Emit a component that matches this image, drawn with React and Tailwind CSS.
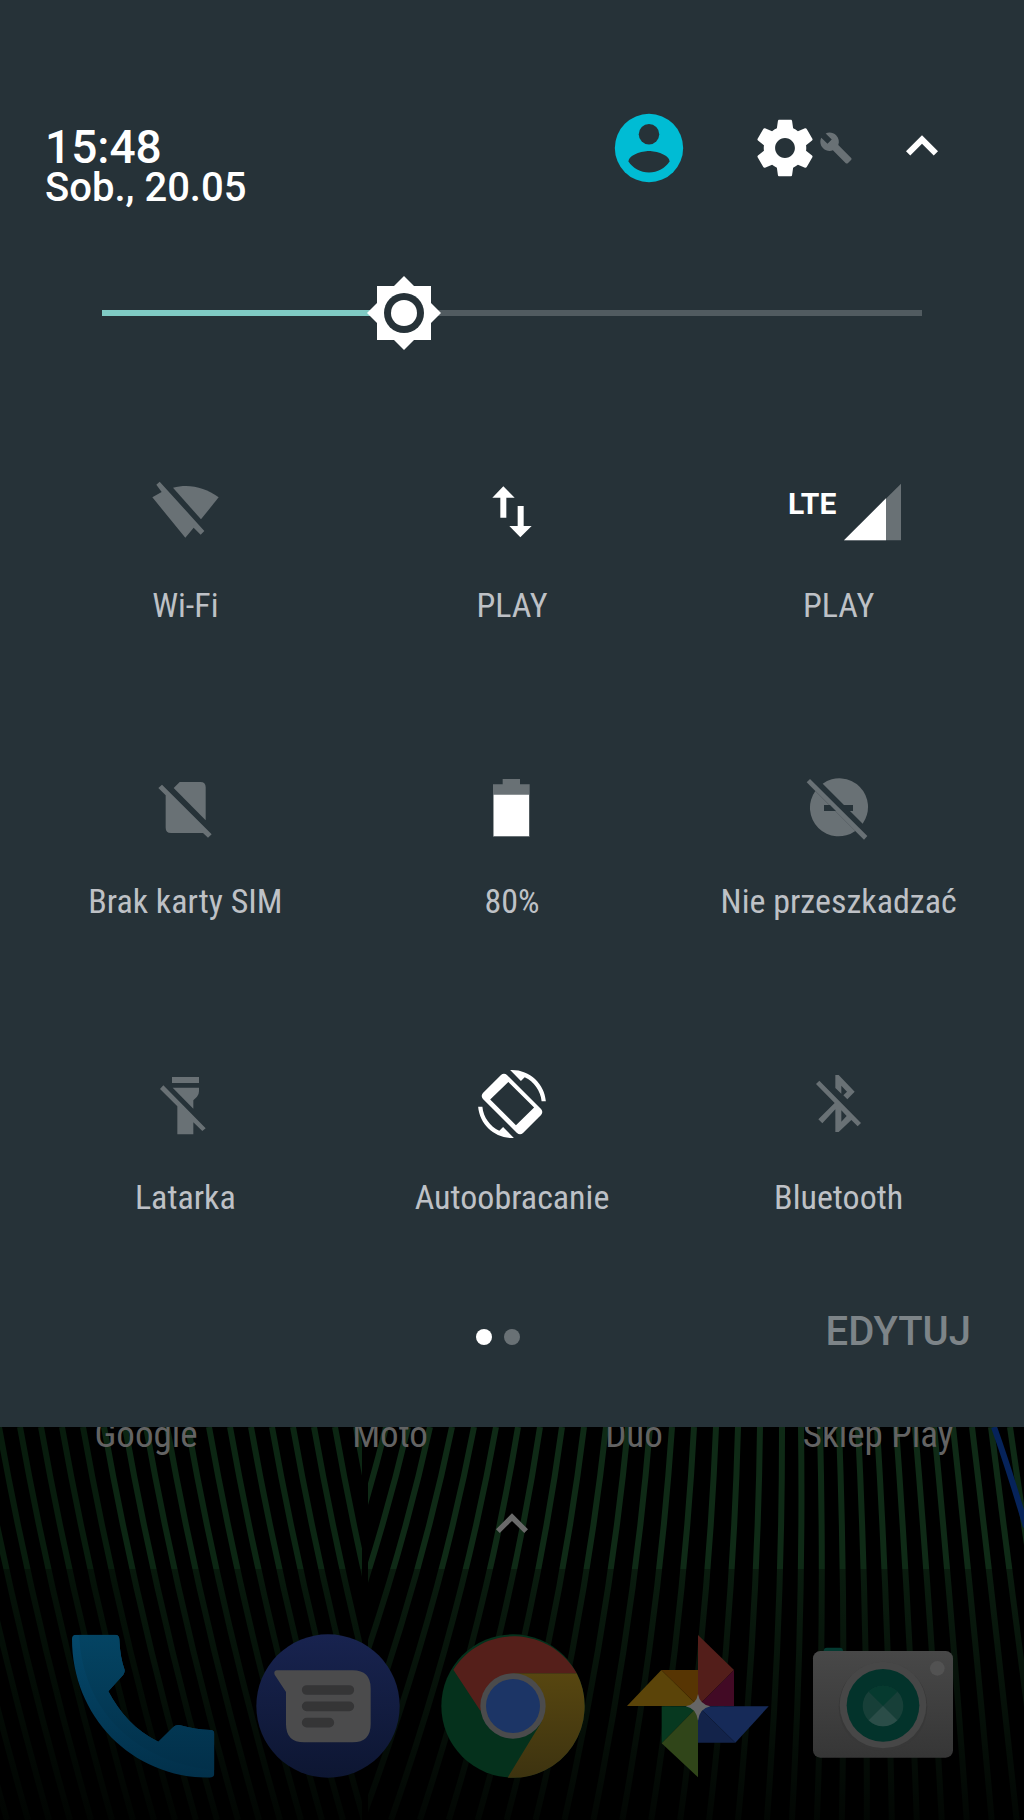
import { useState } from "react";

const DIM = "#697175";
const PANEL = "#263238";

function Glyph({ children }) {
  return (
    <svg viewBox="0 0 204 204" className="size-[68px] shrink-0" aria-hidden="true">
      {children}
    </svg>
  );
}

const icons = {
  wifi: (
    <Glyph>
      <path fill={DIM} d="M16 20 26 11 160 159 149 170 128 149 103 179 4 58 32 42Z" />
      <path fill={DIM} d="M66 29C115 17 162 28 203 58L150 124Z" />
    </Glyph>
  ),
  data: (
    <Glyph>
      <path fill="#fff" d="M76 25 110 59H85V119H67V59H43Z" />
      <path fill="#fff" d="M119 84H137V144H161L127 178 94 144H119Z" />
    </Glyph>
  ),
  signal: (
    <span className="flex items-start gap-2 pl-3">
      <span className="pt-[10px] text-[30px] leading-8 font-bold text-white">LTE</span>
      <svg viewBox="0 0 171 204" className="h-[68px] w-[57px]" aria-hidden="true">
        <path fill={DIM} d="M0 187 171 17V187Z" />
        <path fill="#fff" d="M0 187 126 61V187Z" />
      </svg>
    </span>
  ),
  sim: (
    <Glyph>
      <path fill={DIM} d="M22 42 33 32 182 181 171 191 156 177H60Q44 177 44 161V64Z" />
      <path fill={DIM} d="M68 42 86 24H148Q164 24 164 40V139Z" />
    </Glyph>
  ),
  battery: (
    <Glyph>
      <path fill={DIM} d="M45 31H74V15H126V31H155V189H45Z" />
      <path fill="#fff" d="M47 62H153V186H47Z" />
    </Glyph>
  ),
  dnd: (
    <Glyph>
      <path fill={DIM} d="M53 29A86 86 0 0 1 173 149Z" />
      <path fill={DIM} d="M31 51A86 86 0 0 0 151 171Z" />
      <path fill={DIM} d="M5 25 15 15 187 186 177 197Z" />
      <path fill={PANEL} d="M57 93H75L93 111H57ZM112 93H144V111H131Z" />
    </Glyph>
  ),
  torch: (
    <Glyph>
      <path fill={DIM} d="M63 21H144V39H63Z" />
      <path fill={DIM} d="M27 57 37 46 164 175 154 183 127 157V193H79V109Z" />
      <path fill={DIM} d="M65 53H144V64Q144 74 138 80L127 91V116Z" />
    </Glyph>
  ),
  rotate: (
    <svg viewBox="0 0 24 24" className="size-[68px]" fill="#fff" aria-hidden="true">
      <path d="M16.48 2.52c3.27 1.55 5.61 4.72 5.97 8.48h1.5C23.44 4.84 18.29 0 12 0l-.66.03 3.81 3.81 1.33-1.32z" />
      <path d="M7.52 21.48C4.25 19.94 1.91 16.76 1.55 13H.05C.56 19.16 5.71 24 12 24l.66-.03-3.81-3.81-1.33 1.32z" />
      <path
        fillRule="evenodd"
        d="M10.23 1.75c-.59-.59-1.54-.59-2.12 0L1.75 8.11c-.59.59-.59 1.54 0 2.12l12.02 12.02c.59.59 1.54.59 2.12 0l6.36-6.36c.59-.59.59-1.54 0-2.12ZM10.7 4.2 19.8 13.2 13.4 19.5 4.3 10.4Z"
      />
    </svg>
  ),
  bluetooth: (
    <Glyph>
      <path
        fill={DIM}
        fillRule="evenodd"
        d="M33 42 43 32 168 159 158 169 139 150 101 186H91V118L52 160 40 148 89 99ZM109 121V155L125 138Z"
      />
      <path fill={DIM} d="M91 15H101L149 65 127 88 115 76 126 65 109 47V71L91 54Z" />
    </Glyph>
  ),
};

const tiles = [
  ["wifi", "Wi-Fi"],
  ["data", "PLAY"],
  ["signal", "PLAY"],
  ["sim", "Brak karty SIM"],
  ["battery", "80%"],
  ["dnd", "Nie przeszkadzać"],
  ["torch", "Latarka"],
  ["rotate", "Autoobracanie"],
  ["bluetooth", "Bluetooth"],
];

function Header() {
  return (
    <header className="flex items-start justify-between pt-[107px] pr-[70px] pl-[45px]">
      <div className="pt-[17px] font-medium text-white">
        <div className="text-[46px] leading-[46px]">15:48</div>
        <div className="text-[40px] leading-9">Sob., 20.05</div>
      </div>
      <div className="flex h-[82px] items-center">
        <button aria-label="Użytkownik" className="mr-[61px]">
          <svg viewBox="0 0 24 24" className="size-[82px]">
            <circle cx="12" cy="12" r="10" fill="#00bcd4" />
            <circle cx="12" cy="8" r="3" fill={PANEL} />
            <path
              fill={PANEL}
              d="M12 19.2c-2.5 0-4.71-1.28-6-3.22.03-1.99 4-3.08 6-3.08 1.99 0 5.97 1.09 6 3.08-1.29 1.94-3.5 3.22-6 3.22z"
            />
          </svg>
        </button>
        <button aria-label="Ustawienia" className="mr-[37px] flex items-center">
          <svg viewBox="0 0 24 24" className="size-[68px]" fill="#fff">
            <path d="M19.43 12.98c.04-.32.07-.64.07-.98s-.03-.66-.07-.98l2.11-1.65c.19-.15.24-.42.12-.64l-2-3.46c-.12-.22-.39-.3-.61-.22l-2.49 1c-.52-.4-1.08-.73-1.69-.98l-.38-2.65C14.46 2.18 14.25 2 14 2h-4c-.25 0-.46.18-.49.42l-.38 2.65c-.61.25-1.17.59-1.69.98l-2.49-1c-.23-.09-.49 0-.61.22l-2 3.46c-.13.22-.07.49.12.64l2.11 1.65c-.04.32-.07.65-.07.98s.03.66.07.98l-2.11 1.65c-.19.15-.24.42-.12.64l2 3.46c.12.22.39.3.61.22l2.49-1c.52.4 1.08.73 1.69.98l.38 2.65c.03.24.24.42.49.42h4c.25 0 .46-.18.49-.42l.38-2.65c.61-.25 1.17-.59 1.69-.98l2.49 1c.23.09.49 0 .61-.22l2-3.46c.12-.22.07-.49-.12-.64l-2.11-1.65zM12 15.5c-1.93 0-3.5-1.57-3.5-3.5s1.57-3.5 3.5-3.5 3.5 1.57 3.5 3.5-1.57 3.5-3.5 3.5z" />
          </svg>
          <svg viewBox="0 0 24 24" className="size-[34px]" fill={DIM}>
            <path d="M22.7 19l-9.1-9.1c.9-2.3.4-5-1.5-6.9-2-2-5-2.4-7.4-1.3L9 6 6 9 1.6 4.7C.4 7.1.9 10.1 2.9 12.1c1.9 1.9 4.6 2.4 6.9 1.5l9.1 9.1c.4.4 1 .4 1.4 0l2.3-2.3c.5-.4.5-1.1.1-1.4z" />
          </svg>
        </button>
        <button aria-label="Zwiń">
          <svg viewBox="0 0 24 24" className="size-16" fill="#fff">
            <path d="M12 7.2l-6 6 1.6 1.6L12 10.4l4.4 4.4L18 13.2z" />
          </svg>
        </button>
      </div>
    </header>
  );
}

function Brightness() {
  const [value, setValue] = useState(94);
  const percent = `${(value / 255) * 100}%`;
  return (
    <div className="mx-[102px] mt-[70px]">
      <div className="relative flex h-[74px] items-center">
        <div className="h-[6px] w-full bg-[#515b60]">
          <div className="h-full bg-[#80cbc4]" style={{ width: percent }} />
        </div>
        <svg
          viewBox="-37 -37 74 74"
          className="absolute size-[74px] -translate-x-1/2"
          style={{ left: percent }}
          aria-hidden="true"
        >
          <path fill="#fff" d="M-27-27H27V27H-27Z" />
          <path fill="#fff" d="M0-37 37 0 0 37-37 0Z" />
          <circle r="20" fill={PANEL} />
          <circle r="13" fill="#fff" />
        </svg>
        <input
          type="range"
          aria-label="Jasność"
          min="0"
          max="255"
          value={value}
          onChange={(e) => setValue(Number(e.target.value))}
          className="absolute inset-0 size-full cursor-pointer opacity-0"
        />
      </div>
    </div>
  );
}

function Wallpaper() {
  const left = Array.from({ length: 25 }, (_, i) => i * 21 - 148);
  const right = Array.from({ length: 36 }, (_, i) => 386 + i * 22 - Math.max(0, i - 18) * 3);
  return (
    <svg
      viewBox="0 0 1024 393"
      preserveAspectRatio="none"
      className="absolute inset-0 size-full"
      fill="none"
      strokeWidth="6"
      aria-hidden="true"
    >
      <defs>
        <clipPath id="left-half">
          <path d="M0 0H362V393H0Z" />
        </clipPath>
        <clipPath id="right-half">
          <path d="M368 0H1024V393H368Z" />
        </clipPath>
        <linearGradient id="fade" x1="0" y1="0" x2="0" y2="1">
          <stop offset="0" stopColor="#000" stopOpacity="0.35" />
          <stop offset="1" stopColor="#000" stopOpacity="0.85" />
        </linearGradient>
      </defs>
      <g clipPath="url(#left-half)">
        {left.map((x) => (
          <path key={x} stroke={x < 100 ? "#081c0d" : "#0c2613"} d={`M${x} 0Q${x + 34} 190 ${x + 92} 393`} />
        ))}
      </g>
      <g clipPath="url(#right-half)">
        {right.map((x) => {
          const s = (x - 830) / 1250;
          return (
            <path key={x} stroke="#0f2a16" d={`M${x} 0Q${x + s * 150 + 6} 190 ${x + s * 393} 393`} />
          );
        })}
      </g>
      <path d="M994 0Q1010 45 1026 100" stroke="#06235a" strokeWidth="6" />
      <path d="M0 142H1024V393H0Z" fill="url(#fade)" />
    </svg>
  );
}

function PhoneIcon() {
  return (
    <svg viewBox="0 0 432 432" className="size-36">
      <defs>
        <linearGradient id="phone" x1="0" y1="0" x2="0" y2="1">
          <stop offset="0" stopColor="#04486b" />
          <stop offset="1" stopColor="#02304a" />
        </linearGradient>
        <linearGradient id="phone-face" x1="0" y1="0" x2="0" y2="1">
          <stop offset="0" stopColor="#044463" />
          <stop offset="1" stopColor="#02304a" />
        </linearGradient>
        <clipPath id="phone-shape">
          <path d="M3 14Q3 2 16 2H132Q145 2 145 16Q147 70 161 108Q162 116 157 122L112 172C145 235 195 292 262 323L304 282Q314 270 328 274Q370 286 418 288Q430 288 430 300V418Q430 431 416 431C180 431 3 245 3 14Z" />
        </clipPath>
      </defs>
      <g clipPath="url(#phone-shape)">
        <path fill="url(#phone)" d="M0 0H432V432H0Z" />
        <path fill="url(#phone-face)" d="M24 0H432V408H420C190 380 34 230 24 0Z" />
      </g>
    </svg>
  );
}

function MessagesIcon() {
  return (
    <svg viewBox="0 0 432 432" className="size-36">
      <defs>
        <linearGradient id="msg" x1="0" y1="0" x2="0" y2="1">
          <stop offset="0" stopColor="#18234f" />
          <stop offset="1" stopColor="#0d1632" />
        </linearGradient>
      </defs>
      <circle cx="216" cy="216" r="215" fill="url(#msg)" />
      <path
        fill="#4b4b4c"
        d="M62 109H290Q344 109 344 163V271Q344 325 290 325H144Q90 325 90 271V174L56 122Q52 111 62 109Z"
      />
      <path
        d="M152 168H280M152 217H280M152 266H220"
        stroke="#353536"
        strokeWidth="29"
        strokeLinecap="round"
      />
    </svg>
  );
}

function ChromeIcon() {
  return (
    <svg viewBox="0 0 432 432" className="size-36">
      <defs>
        <linearGradient id="yellow" x1="0" y1="0" x2="0" y2="1">
          <stop offset="0" stopColor="#574610" />
          <stop offset="1" stopColor="#3d3310" />
        </linearGradient>
      </defs>
      <circle cx="216" cy="216" r="215" fill="#05311c" />
      <path fill="url(#yellow)" d="M216 118H407A215 215 0 0 1 200 431L301 265Z" />
      <path fill="#551f1a" d="M37 107A215 215 0 0 1 407 118H216L118 230Z" />
      <circle cx="216" cy="216" r="98" fill="#4b4b4c" />
      <circle cx="216" cy="216" r="81" fill="#1c3566" />
    </svg>
  );
}

function PhotosIcon() {
  return (
    <svg viewBox="0 0 432 432" className="size-36">
      <path fill="#5b4409" d="M3 216 106 108 216 216Z" />
      <path fill="#573503" d="M106 108H216V216Z" />
      <path fill="#531e1a" d="M216 3 324 108 216 216Z" />
      <path fill="#420a25" d="M324 108V216H216Z" />
      <path fill="#073920" d="M107 217H216L107 328Z" />
      <path fill="#304519" d="M216 217V430L107 328Z" />
      <path fill="#162a58" d="M216 217H428L328 326Z" />
      <path fill="#13234a" d="M216 217 328 326H216Z" />
      <path fill="#666" d="M216 180Q221 211 253 217Q221 223 216 260Q211 223 179 217Q211 211 216 180Z" />
    </svg>
  );
}

function CameraIcon() {
  return (
    <svg viewBox="0 0 432 432" className="size-36">
      <defs>
        <linearGradient id="camera" x1="0" y1="0" x2="0" y2="1">
          <stop offset="0" stopColor="#484848" />
          <stop offset="1" stopColor="#363636" />
        </linearGradient>
      </defs>
      <rect x="38" y="41" width="58" height="30" rx="10" fill="#043a31" />
      <rect x="6" y="51" width="420" height="320" rx="22" fill="url(#camera)" />
      <circle cx="216" cy="218" r="133" fill="#383838" />
      <circle cx="216" cy="213" r="130" fill="#474747" />
      <circle cx="216" cy="214" r="109" fill="#03332b" />
      <circle cx="216" cy="216" r="61" fill="#173f38" />
      <path fill="#063a2f" d="M216 216 173 173A61 61 0 0 1 259 173Z" />
      <path fill="#2b4d48" d="M216 216 259 259A61 61 0 0 1 173 259Z" />
      <circle cx="379" cy="103" r="22" fill="#525252" />
    </svg>
  );
}

const dock = [
  ["Telefon", PhoneIcon],
  ["Wiadomości", MessagesIcon],
  ["Chrome", ChromeIcon],
  ["Zdjęcia", PhotosIcon],
  ["Aparat", CameraIcon],
];

export default function App() {
  return (
    <div className="flex min-h-screen flex-col bg-black font-[Roboto,sans-serif]">
      <section className="bg-[#263238]">
        <Header />
        <Brightness />
        <div className="grid grid-cols-3 px-[22px] pt-[30px]">
          {tiles.map(([icon, label]) => (
            <button key={icon} className="flex h-[296px] flex-col items-center pt-[98px]">
              {icons[icon]}
              <span className="mt-[39px] font-['Roboto_Condensed',Roboto,sans-serif] text-[34px] leading-10 whitespace-nowrap text-[#bec1c6]">
                {label}
              </span>
            </button>
          ))}
        </div>
        <footer className="grid h-[159px] grid-cols-[1fr_auto_1fr] items-start pt-10">
          <span />
          <div className="flex gap-3 pt-[21px] pr-7">
            <span className="size-4 rounded-full bg-white" />
            <span className="size-4 rounded-full bg-[#697175]" />
          </div>
          <button className="mr-[53px] justify-self-end text-[40px] leading-[48px] font-medium text-[#7d8488]">
            EDYTUJ
          </button>
        </footer>
      </section>

      <main className="relative flex flex-1 flex-col justify-between overflow-hidden">
        <Wallpaper />
        <div className="relative -mt-[10px] grid grid-cols-4 px-6 text-center font-['Roboto_Condensed',Roboto,sans-serif] text-[37px] leading-9 text-[#636363]">
          {["Google", "Moto", "Duo", "Sklep Play"].map((name) => (
            <a key={name} href={`#${name}`}>
              {name}
            </a>
          ))}
        </div>
        <button aria-label="Wszystkie aplikacje" className="relative mb-10 self-center">
          <svg viewBox="0 0 24 24" className="size-16" fill="#6a6a6a">
            <path d="M12 8l-6 6 1.41 1.41L12 10.83l4.59 4.58L18 14z" />
          </svg>
        </button>
        <nav className="relative flex justify-between pr-[69px] pb-[42px] pl-[71px]">
          {dock.map(([name, Icon]) => (
            <a key={name} href={`#${name}`} aria-label={name}>
              <Icon />
            </a>
          ))}
        </nav>
      </main>
    </div>
  );
}
